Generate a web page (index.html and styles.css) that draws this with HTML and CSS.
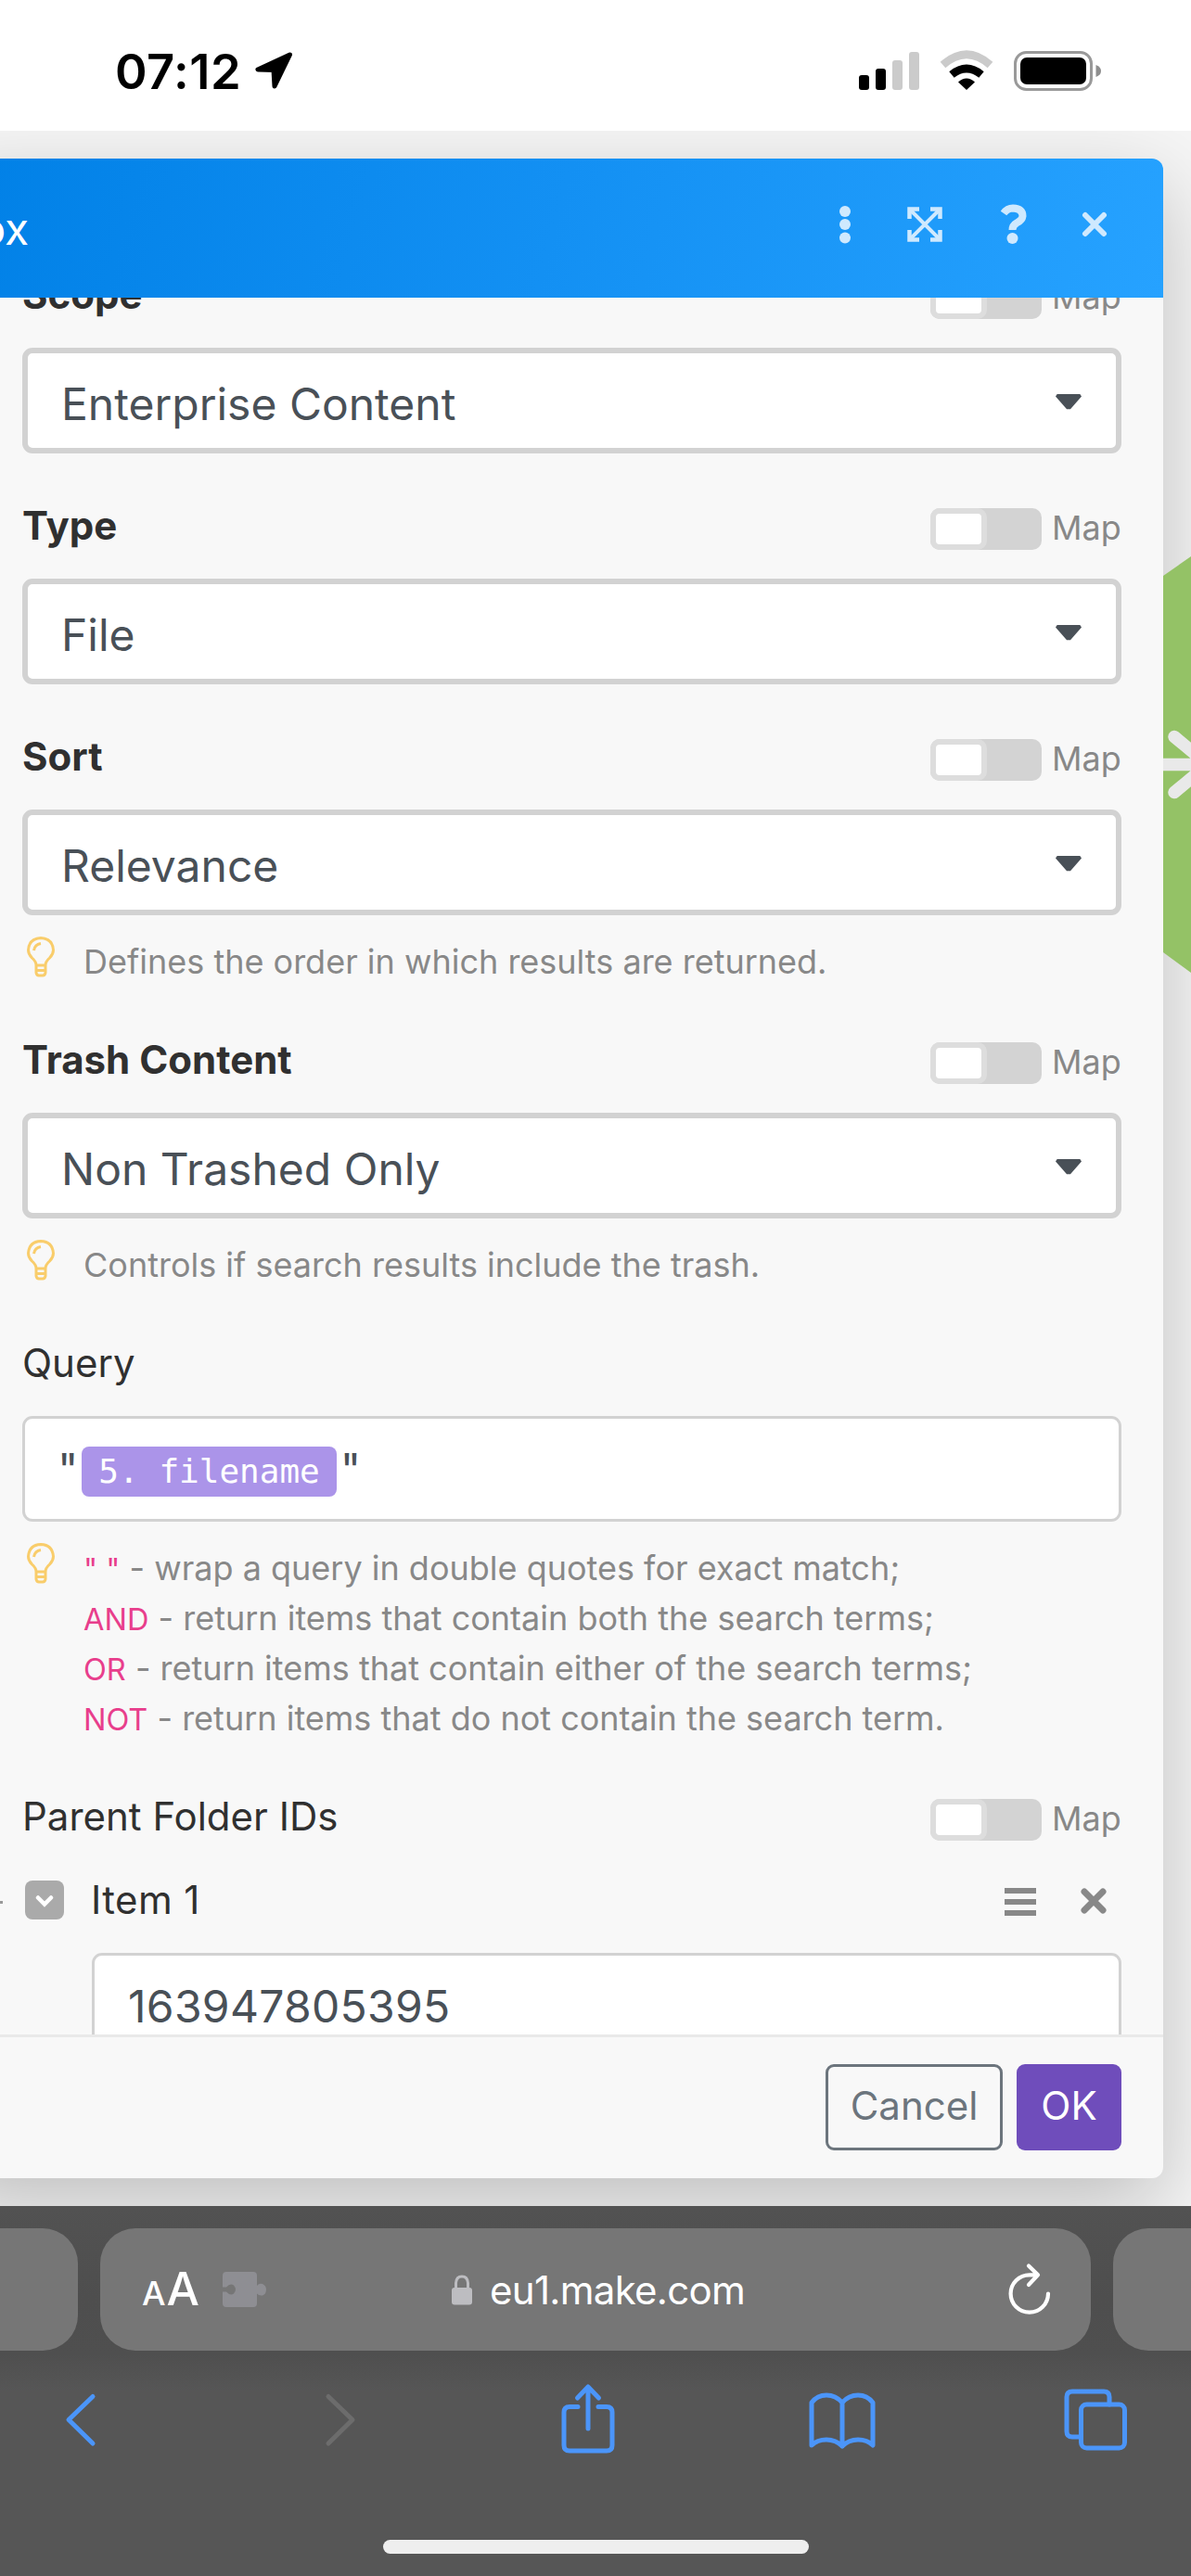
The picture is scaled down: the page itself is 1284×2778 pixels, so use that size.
FILE: index.html
```
<!DOCTYPE html>
<html lang="en">

<head>
    <meta charset="UTF-8">
    <title>Make</title>
    <link rel="stylesheet" href="styles.css">
</head>

<body>
    <div class="status-bar">
        <span class="time">07:12</span>
        <svg class="location" width="44" height="44" viewBox="0 0 44 44">
            <path d="M39.500 5 L5 21 L22 21.500 L23 39 Z" fill="#000" stroke="#000" stroke-width="5" stroke-linejoin="round" />
        </svg>
        <div class="status-icons">
            <svg width="65" height="44" viewBox="0 0 65 44">
                <rect x="0" y="27" width="11" height="16" rx="3" />
                <rect x="18" y="20" width="11" height="23" rx="3" />
                <rect x="36" y="11" width="11" height="32" rx="3" fill="#cbcbcb" />
                <rect x="54" y="2" width="11" height="41" rx="3" fill="#cbcbcb" />
            </svg>
            <svg width="58" height="44" viewBox="0 0 58 44">
                <path d="M3.500 16 Q29 -6.500 54.500 16" fill="none" stroke="#cbcbcb" stroke-width="8.500" />
                <path d="M13 26.500 Q29 13.500 45 26.500" fill="none" stroke="#000" stroke-width="8.500" />
                <path d="M20 34.500 Q29 26.500 38 34.500 L29 43 Z" />
            </svg>
            <svg width="96" height="44" viewBox="0 0 96 44">
                <rect x="1.500" y="2.500" width="82" height="40" rx="12" fill="none" stroke="#999" stroke-width="3" />
                <rect x="7" y="8" width="71" height="29" rx="7" />
                <path d="M88.500 16 Q94 18 94 22.500 Q94 27 88.500 29 Z" fill="#8e8e8e" />
            </svg>
        </div>
    </div>

    <div class="page">
        <svg class="module" width="30" height="460" viewBox="0 0 30 460">
            <path d="M0 25 L30 4 V453 L0 431 Z" fill="#94c266" />
            <path d="M0 228.500 H48 M12 198.500 L48 228.500 L12 258.500" fill="none" stroke="#e9e9e9" stroke-width="13.500" stroke-linecap="round" />
        </svg>
        <div class="dialog">
            <div class="dialog-header">
                <span class="dialog-title">Box</span>
                <svg width="12" height="44" viewBox="0 0 12 44">
                    <circle cx="6" cy="8" r="6" />
                    <circle cx="6" cy="22" r="6" />
                    <circle cx="6" cy="36.500" r="6" />
                </svg>
                <svg class="icon-expand" width="38" height="38" viewBox="0 0 38 38">
                    <path d="M3 3 L35 35 M35 3 L3 35" stroke-width="4" />
                    <path d="M2.500 13 V2.500 H13 M25 2.500 H35.500 V13 M35.500 25 V35.500 H25 M13 35.500 H2.500 V25" stroke-width="4.500" />
                </svg>
                <svg class="icon-help" width="32" height="44" viewBox="0 0 32 44">
                    <path d="M5 10 Q9 4.500 15 4.500 Q25.500 5 25.500 13 Q25 17.500 19 20.500 Q14.500 23 14.500 28" stroke-width="8" />
                    <circle cx="14.500" cy="37" r="6" />
                </svg>
                <svg class="icon-close" width="28" height="28" viewBox="0 0 28 28">
                    <path d="M4 4 L24 24 M24 4 L4 24" stroke-width="6" stroke-linecap="round" />
                </svg>
            </div>

            <div class="dialog-body">
                <div class="fields">
                    <div class="field">
                        <div class="field-head">
                            <label class="required">Scope</label>
                            <span class="switch"></span>
                            <span class="map">Map</span>
                        </div>
                        <div class="select">Enterprise Content<span class="caret"></span></div>
                    </div>

                    <div class="field">
                        <div class="field-head">
                            <label class="required">Type</label>
                            <span class="switch"></span>
                            <span class="map">Map</span>
                        </div>
                        <div class="select">File<span class="caret"></span></div>
                    </div>

                    <div class="field">
                        <div class="field-head">
                            <label class="required">Sort</label>
                            <span class="switch"></span>
                            <span class="map">Map</span>
                        </div>
                        <div class="select">Relevance<span class="caret"></span></div>
                        <div class="hint">
                            <svg class="bulb" viewBox="0 0 30 44">
                                <path d="M10 31 Q10 27 5.500 23 Q1.500 19 1.500 14.500 Q2.500 2 15 1.500 Q27.500 2 28.500 14.500 Q28.500 19 24.500 23 Q20 27 20 31 Z M10 31 V39 Q10.500 42 13 42 H17 Q19.500 42 20 39 V31 M10 36.500 H20 M7.500 15 Q8.500 8.500 15 7.500" />
                            </svg>
                            <p>Defines the order in which results are returned.</p>
                        </div>
                    </div>

                    <div class="field">
                        <div class="field-head">
                            <label class="required">Trash Content</label>
                            <span class="switch"></span>
                            <span class="map">Map</span>
                        </div>
                        <div class="select">Non Trashed Only<span class="caret"></span></div>
                        <div class="hint">
                            <svg class="bulb" viewBox="0 0 30 44">
                                <path d="M10 31 Q10 27 5.500 23 Q1.500 19 1.500 14.500 Q2.500 2 15 1.500 Q27.500 2 28.500 14.500 Q28.500 19 24.500 23 Q20 27 20 31 Z M10 31 V39 Q10.500 42 13 42 H17 Q19.500 42 20 39 V31 M10 36.500 H20 M7.500 15 Q8.500 8.500 15 7.500" />
                            </svg>
                            <p>Controls if search results include the trash.</p>
                        </div>
                    </div>

                    <div class="field">
                        <div class="field-head">
                            <label>Query</label>
                        </div>
                        <div class="input">"<span class="pill">5. filename</span>"</div>
                        <div class="hint">
                            <svg class="bulb" viewBox="0 0 30 44">
                                <path d="M10 31 Q10 27 5.500 23 Q1.500 19 1.500 14.500 Q2.500 2 15 1.500 Q27.500 2 28.500 14.500 Q28.500 19 24.500 23 Q20 27 20 31 Z M10 31 V39 Q10.500 42 13 42 H17 Q19.500 42 20 39 V31 M10 36.500 H20 M7.500 15 Q8.500 8.500 15 7.500" />
                            </svg>
                            <p><code>" "</code> - wrap a query in double quotes for exact match;<br>
                                <code>AND</code> - return items that contain both the search terms;<br>
                                <code>OR</code> - return items that contain either of the search terms;<br>
                                <code>NOT</code> - return items that do not contain the search term.</p>
                        </div>
                    </div>

                    <div class="field">
                        <div class="field-head">
                            <label>Parent Folder IDs</label>
                            <span class="switch"></span>
                            <span class="map">Map</span>
                        </div>
                        <div class="item-head">
                            <span class="dash"></span>
                            <span class="collapse">
                                <svg width="20" height="14" viewBox="0 0 20 14">
                                    <path d="M3 3.500 L10 10.500 L17 3.500" fill="none" stroke="#fff" stroke-width="4.500" stroke-linecap="round" />
                                </svg>
                            </span>
                            <label>Item 1</label>
                            <svg class="icon-menu" width="34" height="30" viewBox="0 0 34 30">
                                <path d="M0 3 H34 M0 15 H34 M0 27 H34" stroke="#888" stroke-width="6" />
                            </svg>
                            <svg width="28" height="28" viewBox="0 0 28 28">
                                <path d="M4 4 L24 24 M24 4 L4 24" stroke="#888" stroke-width="7" stroke-linecap="round" />
                            </svg>
                        </div>
                        <div class="input item-input">163947805395</div>
                    </div>
                </div>
            </div>

            <div class="dialog-footer">
                <button class="btn btn-cancel">Cancel</button>
                <button class="btn btn-ok">OK</button>
            </div>
        </div>
    </div>

    <div class="browser">
        <div class="tabs">
            <div class="tab tab-prev"></div>
            <div class="tab tab-active">
                <span class="text-size"><small>A</small>A</span>
                <svg class="puzzle" width="48" height="40" viewBox="0 0 48 40">
                    <path d="M4 1 H33 Q37 1 37 5 V16 Q39 13 43 14 Q47 16 47 20 Q47 25 43 26.500 Q39 27 37 24.500 V35 Q37 39 33 39 H4 Q0 39 0 35 V22.500 H4 Q8 27 12 24.500 Q16 20 12 15.500 Q8 13 4 17.500 H0 V5 Q0 1 4 1 Z" fill="#8e8e93" />
                </svg>
                <div class="address">
                    <svg width="22" height="33" viewBox="0 0 22 33">
                        <path d="M4.500 16 V9 Q5 2 11 2 Q17 2 17.500 9 V16" fill="none" stroke="#bdbdc1" stroke-width="3" />
                        <rect x="0" y="14" width="22" height="18.500" rx="3" fill="#bdbdc1" />
                    </svg>
                    <span>eu1.make.com</span>
                </div>
                <svg width="46" height="58" viewBox="0 0 46 58">
                    <path d="M43 33.500 A20.200 20.200 0 1 1 22.800 13.300 H31 M22 3.500 L32 13.300 L22 24" fill="none" stroke="#fff" stroke-width="4.200" stroke-linecap="round" stroke-linejoin="round" />
                </svg>
            </div>
            <div class="tab tab-next"></div>
        </div>
        <div class="toolbar">
            <svg viewBox="0 0 36 76">
                <path d="M31 13.500 L5 38.500 L31 64" />
            </svg>
            <svg class="off" viewBox="0 0 36 76">
                <path d="M11 13.500 L37 38.500 L11 64" />
            </svg>
            <svg viewBox="0 0 58 76">
                <path d="M18 24.500 H9 Q3 24.500 3 30.500 V66 Q3 72 9 72 H49 Q55 72 55 66 V30.500 Q55 24.500 49 24.500 H40 M29 48 V5 M17.500 15 L29 3 L40.500 15" />
            </svg>
            <svg viewBox="0 0 72 76">
                <path d="M36 20 Q29 12 19 12 Q9 12 3 20 V66 Q9 60 19 60 Q29 60 36 67 Q43 60 53 60 Q63 60 69 66 V20 Q63 12 53 12 Q43 12 36 20 V67" />
            </svg>
            <svg viewBox="0 0 68 76">
                <path d="M16 57 H9 Q3 57 3 51 V14 Q3 8 9 8 H43 Q49 8 49 14 V22" />
                <rect x="18.500" y="22" width="47" height="47" rx="6" />
            </svg>
        </div>
        <div class="home-indicator"></div>
    </div>
</body>

</html>
```
FILE: styles.css
```
*,
*::before {
    box-sizing: border-box;
}

body {
    margin: 0;
    width: 1284px;
    height: 2778px;
    display: flex;
    flex-direction: column;
    overflow: hidden;
    font-family: Inter, "Liberation Sans", sans-serif;
}

svg {
    display: block;
    flex-shrink: 0;
}

p {
    margin: 0;
}

/* status bar */
.status-bar {
    height: 141px;
    flex-shrink: 0;
    display: flex;
    align-items: flex-start;
    padding: 54px 95px 0 124px;
    background: #fff;
}

.time {
    width: 149px;
    font-size: 52.5px;
    font-weight: 600;
    line-height: 46px;
    letter-spacing: 0.5px;
}

.status-icons {
    margin-left: auto;
    display: flex;
    gap: 22px;
}

/* page behind the dialog */
.page {
    position: relative;
    height: 2238px;
    flex-shrink: 0;
    padding: 30px 30px 30px 0;
    background: #f5f5f5;
    overflow: hidden;
}

.module {
    position: absolute;
    top: 455px;
    right: 0;
}

.dialog {
    height: 2178px;
    margin-left: -60px;
    padding-left: 60px;
    display: flex;
    flex-direction: column;
    background: #f8f8f8;
    border-radius: 12px;
    box-shadow: 0 30px 90px rgba(0, 0, 0, 0.22);
    overflow: hidden;
}

.dialog-header {
    height: 150px;
    flex-shrink: 0;
    margin-left: -60px;
    padding: 0 60px 0 6px;
    display: flex;
    align-items: center;
    background: linear-gradient(105deg, #0080e6 0%, #1390f3 50%, #26a2ff 100%);
    color: #fff;
}

.dialog-header svg {
    fill: #cfe9fe;
    margin-bottom: 8px;
}

.dialog-header path {
    fill: none;
    stroke: #cfe9fe;
}

.dialog-title {
    flex: 1;
    font-size: 48px;
}

.icon-expand {
    margin-left: 61px;
}

.icon-help {
    margin-left: 61px;
}

.icon-close {
    margin-left: 57px;
}

.dialog-body {
    height: 1873px;
    flex-shrink: 0;
    overflow: hidden;
}

.fields {
    margin-top: -22px;
    padding: 0 45px 0 24px;
}

.field {
    margin-bottom: 59px;
}

.field-head {
    height: 76px;
    display: flex;
    align-items: flex-start;
}

label {
    flex: 1;
    font-size: 42px;
    line-height: 37px;
    color: #303030;
}

.required {
    font-weight: 700;
}

.switch {
    width: 120px;
    height: 45px;
    border-radius: 10px;
    background: #d3d3d3;
}

.switch::before {
    content: "";
    display: block;
    width: 61px;
    height: 45px;
    border: 6px solid #dddddd;
    border-radius: 10px;
    background: #fff;
}

.map {
    margin-left: 11px;
    width: 75px;
    font-size: 36px;
    line-height: 42px;
    color: #888;
}

.select,
.input {
    height: 114px;
    display: flex;
    align-items: center;
    border: 6px solid #d2d2d2;
    border-radius: 11px;
    background: #fff;
    font-size: 48px;
    color: #495057;
    padding: 6px 37px 0 36px;
}

.caret {
    margin: 0 0 3px auto;
    width: 28px;
    height: 17px;
    background: #495057;
    clip-path: polygon(6% 0, 94% 0, 100% 14%, 57% 96%, 43% 96%, 0 14%);
}

.input {
    border-width: 3px;
    padding: 0 35px;
}

.pill {
    height: 54px;
    margin: 5px 4px 0 4px;
    padding: 0 18px;
    border-radius: 8px;
    background: #ab94e9;
    color: #fff;
    font: 36px/54px "DejaVu Sans Mono", monospace;
}

.hint {
    display: flex;
    padding: 23px 0 1px 5px;
}

.bulb {
    width: 30px;
    height: 44px;
    margin-right: 31px;
    fill: none;
    stroke: #f9cd6b;
    stroke-width: 3;
}

.hint p {
    font-size: 36px;
    line-height: 54px;
    color: #888;
}

code {
    font-family: inherit;
    font-size: 32.5px;
    line-height: 1;
    color: #e83e8c;
}

.item-head {
    height: 90px;
    display: flex;
    align-items: flex-start;
    padding: 12px 16px 0 0;
    margin-left: -24px;
}

.item-head label {
    margin: 2px 0 0 29px;
    letter-spacing: 0.4px;
}

.item-head svg {
    margin-top: 8px;
}

.item-head .icon-menu {
    margin-right: 48px;
}

.dash {
    width: 3px;
    height: 3px;
    margin: 22px 24px 0 0;
    background: #999;
}

.collapse {
    width: 42px;
    height: 42px;
    display: flex;
    align-items: flex-start;
    justify-content: center;
    padding-top: 7px;
    border-radius: 8px;
    background: #aaa;
}

.item-input {
    margin-left: 75px;
    padding-left: 36px;
    letter-spacing: 0.3px;
}

.dialog-footer {
    flex: 1;
    display: flex;
    align-items: flex-start;
    justify-content: flex-end;
    gap: 15px;
    padding: 29px 45px 0 0;
    margin-left: -60px;
    border-top: 3px solid #e9e9e9;
}

.btn {
    height: 93px;
    border-radius: 9px;
    font-family: inherit;
    font-size: 42px;
    padding: 0 0 4px;
}

.btn-cancel {
    width: 191px;
    border: 3px solid #6c757d;
    background: none;
    color: #6c757d;
}

.btn-ok {
    width: 113px;
    border: none;
    background: #6f4dbb;
    color: #fff;
}

/* safari bottom bar */
.browser {
    flex: 1;
    display: flex;
    flex-direction: column;
    background: linear-gradient(#525252, #4e4e4e 25%, #4f4f4f 40%, #565656 50%);
}

.tabs {
    display: flex;
    gap: 24px;
    margin-top: 24px;
}

.tab {
    height: 132px;
    background: #767676;
}

.tab-prev {
    width: 84px;
    border-radius: 0 38px 38px 0;
}

.tab-next {
    width: 84px;
    border-radius: 38px 0 0 38px;
}

.tab-active {
    flex: 1;
    display: flex;
    align-items: center;
    padding: 0 43px 0 45px;
    border-radius: 38px;
    color: #fff;
}

.text-size {
    width: 87px;
    font-size: 50px;
    font-weight: 500;
    line-height: 60px;
    letter-spacing: -1px;
    margin-top: 3px;
}

.text-size small {
    font-size: 36px;
    margin-right: 2px;
}

.address {
    flex: 1;
    display: flex;
    align-items: center;
    gap: 19px;
    margin-left: 199px;
    font-size: 42px;
    letter-spacing: -0.7px;
}

.toolbar {
    display: flex;
    justify-content: space-between;
    padding: 36px 67px 0 51px;
}

.toolbar svg {
    width: 72px;
    height: 76px;
    overflow: visible;
    fill: none;
    stroke: #4b95f9;
    stroke-width: 5;
    stroke-linecap: round;
    stroke-linejoin: round;
}

.toolbar .off {
    stroke: #6c6c6c;
}

.home-indicator {
    width: 459px;
    height: 15px;
    margin: 92px auto 0;
    border-radius: 8px;
    background: #eee;
}
```
